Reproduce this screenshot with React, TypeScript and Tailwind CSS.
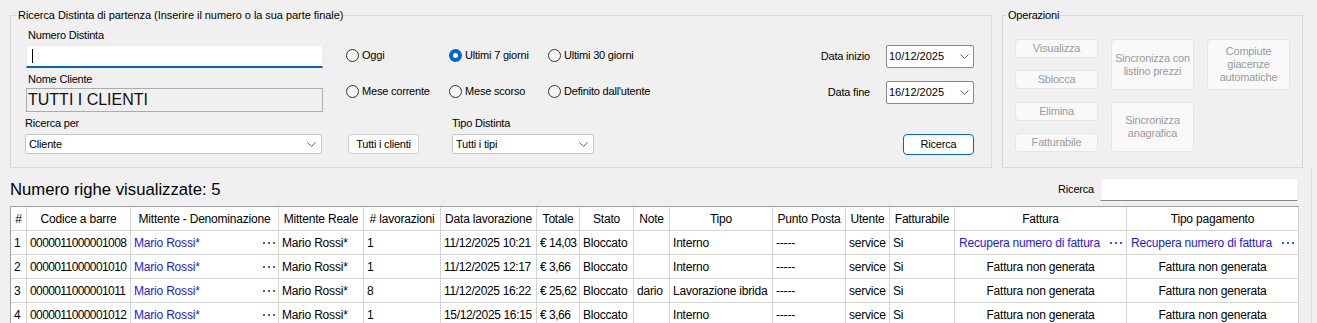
import React from "react";

const Chevron = () => (
  <svg width="9" height="5" viewBox="0 0 9 5" className="shrink-0">
    <path d="M0.5 0.5 L4.5 4.5 L8.5 0.5" fill="none" stroke="#606060" strokeWidth="1" />
  </svg>
);

const Dots = () => (
  <span className="flex items-center gap-[3px] shrink-0">
    <span className="w-[2px] h-[2px] bg-[#2f66c4]" />
    <span className="w-[2px] h-[2px] bg-[#2f66c4]" />
    <span className="w-[2px] h-[2px] bg-[#2f66c4]" />
  </span>
);

function Radio({ checked, label }: { checked?: boolean; label: string }) {
  return (
    <div className="flex items-center gap-[3px] h-[15px]">
      {checked ? (
        <span className="w-[13px] h-[13px] rounded-full bg-[#0067c0] flex items-center justify-center">
          <span className="w-[5px] h-[5px] rounded-full bg-white" />
        </span>
      ) : (
        <span className="w-[13px] h-[13px] rounded-full border border-[#333333] bg-[#f5f5f5]" />
      )}
      <span className="leading-[15px]">{label}</span>
    </div>
  );
}

function OpButton({ children, h }: { children: React.ReactNode; h: string }) {
  return (
    <div
      className={`w-[83px] ${h} bg-[#f9f9f9] border border-[#e4e4e4] rounded-[4px] flex items-center justify-center text-center text-[#9b9b9b] leading-[13px] px-[2px]`}
    >
      {children}
    </div>
  );
}

type Row = {
  n: number;
  code: string;
  lav: string;
  data: string;
  tot: string;
  note: string;
  tipo: string;
  link?: boolean;
};

const rows: Row[] = [
  { n: 1, code: "0000011000001008", lav: "1", data: "11/12/2025 10:21", tot: "€ 14,03", note: "", tipo: "Interno", link: true },
  { n: 2, code: "0000011000001010", lav: "1", data: "11/12/2025 12:17", tot: "€ 3,66", note: "", tipo: "Interno" },
  { n: 3, code: "0000011000001011", lav: "8", data: "11/12/2025 16:22", tot: "€ 25,62", note: "dario", tipo: "Lavorazione ibrida" },
  { n: 4, code: "0000011000001012", lav: "1", data: "15/12/2025 16:15", tot: "€ 3,66", note: "", tipo: "Interno" },
];

const headers = [
  "#",
  "Codice a barre",
  "Mittente - Denominazione",
  "Mittente Reale",
  "# lavorazioni",
  "Data lavorazione",
  "Totale",
  "Stato",
  "Note",
  "Tipo",
  "Punto Posta",
  "Utente",
  "Fatturabile",
  "Fattura",
  "Tipo pagamento",
];

const cell =
  "h-[24px] border-r border-b border-[#d4d4d4] bg-white flex items-center whitespace-nowrap overflow-hidden";

export default function App() {
  return (
    <div className="w-[1317px] h-[323px] overflow-hidden bg-[#f0f0f0] font-['Liberation_Sans',Arial,sans-serif] text-black">
      {/* Top section */}
      <div className="flex gap-[10px] pl-[10px] pt-[8px] text-[11px] tracking-[-0.2px]">
        <fieldset className="w-[982px] h-[160px] border border-[#d9d9d9]">
          <legend className="ml-[6px] px-[1px] leading-[15px] tracking-[-0.05px]">
            Ricerca Distinta di partenza (Inserire il numero o la sua parte finale)
          </legend>
          <div className="flex pl-[14px] pr-[17px] pt-[5px]">
            {/* Column A */}
            <div className="w-[298px] flex flex-col">
              <div className="h-[15px] leading-[15px] pl-[3px]">Numero Distinta</div>
              <div className="mt-[2px] ml-[1px] w-[297px] h-[23px] bg-white border border-[#ececec] border-b-2 border-b-[#0067c0] flex items-center pl-[5px]">
                <span className="w-px h-[14px] bg-black" />
              </div>
              <div className="mt-[4px] h-[15px] leading-[15px] pl-[3px]">Nome Cliente</div>
              <div className="mt-[1px] ml-[1px] w-[297px] h-[24px] bg-[#f0f0f0] border border-[#acacac] flex items-center pl-[1px] text-[16px] tracking-normal text-[#111]">
                TUTTI I CLIENTI
              </div>
              <div className="mt-[4px] h-[15px] leading-[15px]">Ricerca per</div>
              <div className="mt-[3px] w-[297px] h-[20px] bg-white border border-[#c4c4c4] rounded-[2px] flex items-center justify-between pl-[3px] pr-[5px]">
                <span>Cliente</span>
                <Chevron />
              </div>
            </div>

            {/* Column B */}
            <div className="ml-[23px] flex flex-col">
              <div className="mt-[20px] grid grid-cols-[103px_99px_auto] gap-y-[21px]">
                <Radio label="Oggi" />
                <Radio checked label="Ultimi 7 giorni" />
                <Radio label="Ultimi 30 giorni" />
                <Radio label="Mese corrente" />
                <Radio label="Mese scorso" />
                <Radio label="Definito dall'utente" />
              </div>
              <div className="mt-[17px] flex items-end">
                <div className="ml-[2px] w-[71px] h-[20px] bg-[#fdfdfd] border border-[#d0d0d0] rounded-[4px] flex items-center justify-center">
                  Tutti i clienti
                </div>
                <div className="ml-[33px] flex flex-col">
                  <div className="h-[15px] leading-[15px]">Tipo Distinta</div>
                  <div className="mt-[3px] w-[142px] h-[20px] bg-white border border-[#c4c4c4] rounded-[2px] flex items-center justify-between pl-[3px] pr-[5px]">
                    <span>Tutti i tipi</span>
                    <Chevron />
                  </div>
                </div>
              </div>
            </div>

            {/* Column C */}
            <div className="ml-auto flex flex-col items-end mt-[17px]">
              <div className="flex items-center gap-[16px]">
                <span>Data inizio</span>
                <div className="w-[88px] h-[23px] bg-white border border-[#8a8a8a] rounded-[2px] flex items-center justify-between pl-[2px] pr-[4px] tracking-normal">
                  <span>10/12/2025</span>
                  <Chevron />
                </div>
              </div>
              <div className="mt-[13px] flex items-center gap-[16px]">
                <span>Data fine</span>
                <div className="w-[88px] h-[23px] bg-white border border-[#8a8a8a] rounded-[2px] flex items-center justify-between pl-[2px] pr-[4px] tracking-normal">
                  <span>16/12/2025</span>
                  <Chevron />
                </div>
              </div>
              <div className="mt-[30px] w-[71px] h-[21px] bg-white border border-[#0067c0] rounded-[4px] flex items-center justify-center">
                Ricerca
              </div>
            </div>
          </div>
        </fieldset>

        <fieldset className="w-[301px] h-[160px] border border-[#d9d9d9]">
          <legend className="ml-[4px] px-[1px] leading-[15px]">Operazioni</legend>
          <div className="flex gap-[13px] pl-[12px] pt-[16px]">
            <div className="flex flex-col">
              <OpButton h="h-[19px]">Visualizza</OpButton>
              <div className="mt-[12px]">
                <OpButton h="h-[19px]">Sblocca</OpButton>
              </div>
              <div className="mt-[13px]">
                <OpButton h="h-[19px]">Elimina</OpButton>
              </div>
              <div className="mt-[12px]">
                <OpButton h="h-[19px]">Fatturabile</OpButton>
              </div>
            </div>
            <div className="flex flex-col">
              <OpButton h="h-[51px]">Sincronizza con listino prezzi</OpButton>
              <div className="mt-[12px]">
                <OpButton h="h-[50px]">Sincronizza anagrafica</OpButton>
              </div>
            </div>
            <div className="flex flex-col">
              <OpButton h="h-[51px]">Compiute giacenze automatiche</OpButton>
            </div>
          </div>
        </fieldset>
      </div>

      {/* Bottom section */}
      <div className="w-[1312px] border-r border-[#dcdcdc] h-[200px]">
        <div className="flex items-center justify-between pl-[10px] pr-[13px] pt-[10px]">
          <span className="text-[16.7px] leading-[23px]">Numero righe visualizzate: 5</span>
          <div className="flex items-center gap-[6px] text-[11px] tracking-[-0.2px]">
            <span>Ricerca</span>
            <div className="w-[198px] h-[23px] bg-white border border-[#ededed] border-b-[#868686]" />
          </div>
        </div>

        <div className="mt-[5px] ml-[10px] w-[1289px] grid grid-cols-[16px_104px_148px_85px_77px_96px_43px_54px_36px_103px_73px_44px_65px_172px_172px] border-l border-t border-[#a0a0a0] text-[12px] tracking-[-0.2px]">
          {headers.map((h) => (
            <div key={h} className={`${cell} justify-center`}>
              {h}
            </div>
          ))}
          {rows.map((r) => (
            <React.Fragment key={r.n}>
              <div className={`${cell} pl-[3px]`}>{r.n}</div>
              <div className={`${cell} pl-[3px] tracking-[-0.6px]`}>{r.code}</div>
              <div className={`${cell} pl-[3px] pr-[3px] justify-between`}>
                <span className="text-[#1a1ae8]">Mario Rossi*</span>
                <Dots />
              </div>
              <div className={`${cell} pl-[3px]`}>Mario Rossi*</div>
              <div className={`${cell} pl-[3px]`}>{r.lav}</div>
              <div className={`${cell} pl-[3px] tracking-[-0.35px]`}>{r.data}</div>
              <div className={`${cell} pl-[3px] tracking-[-0.5px]`}>{r.tot}</div>
              <div className={`${cell} pl-[3px]`}>Bloccato</div>
              <div className={`${cell} pl-[3px]`}>{r.note}</div>
              <div className={`${cell} pl-[3px]`}>{r.tipo}</div>
              <div className={`${cell} pl-[3px]`}>-----</div>
              <div className={`${cell} pl-[3px]`}>service</div>
              <div className={`${cell} pl-[3px]`}>Si</div>
              {r.link ? (
                <>
                  <div className={`${cell} pl-[4px] pr-[4px] justify-between`}>
                    <span className="text-[#1a1ae8]">Recupera numero di fattura</span>
                    <Dots />
                  </div>
                  <div className={`${cell} pl-[4px] pr-[4px] justify-between`}>
                    <span className="text-[#1a1ae8]">Recupera numero di fattura</span>
                    <Dots />
                  </div>
                </>
              ) : (
                <>
                  <div className={`${cell} justify-center`}>Fattura non generata</div>
                  <div className={`${cell} justify-center`}>Fattura non generata</div>
                </>
              )}
            </React.Fragment>
          ))}
        </div>
      </div>
    </div>
  );
}
